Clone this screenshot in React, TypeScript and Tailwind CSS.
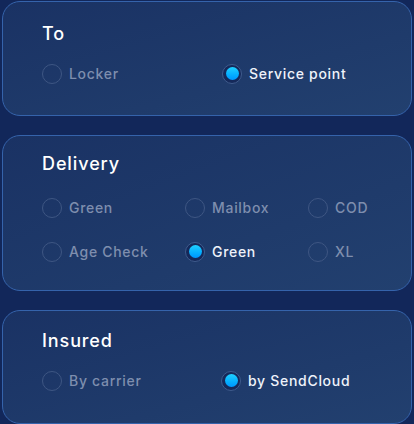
import React from 'react';

type Opt = { label: string; checked?: boolean };

function Radio({ label, checked }: Opt) {
  return (
    <label className="flex items-center gap-[7px] cursor-pointer">
      <span
        className={
          'w-[20px] h-[20px] rounded-full flex items-center justify-center border ' +
          (checked ? 'border-[#3f5b8c] bg-[#15295a]' : 'border-[#3e5683]')
        }
      >
        {checked && (
          <span className="w-[13px] h-[13px] rounded-full bg-gradient-to-b from-[#1fd0ff] to-[#0096ff]" />
        )}
      </span>
      <span
        className={
          'text-[14px] font-medium tracking-[0.7px] ' +
          (checked ? 'text-[#eef2fa]' : 'text-[#7e8eae]')
        }
      >
        {label}
      </span>
    </label>
  );
}

function Card({ title, children, className }: { title: string; children: React.ReactNode; className?: string }) {
  return (
    <section
      className={
        'rounded-[18px] border border-[#3563ab] bg-gradient-to-br from-[#1a3264] to-[#22406f] pl-[39px] pr-4 ' +
        (className ?? '')
      }
    >
      <h2 className="text-[18px] leading-[28px] font-medium text-white tracking-[0.9px]">{title}</h2>
      {children}
    </section>
  );
}

export default function App() {
  return (
    <div
      className="w-[414px] h-[424px] bg-[#12275a] pt-px px-[2px] flex flex-col gap-[19px]"
      style={{ fontFamily: 'Inter, "Liberation Sans", sans-serif' }}
    >
      <Card title="To" className="h-[115px] pt-[18px]">
        <div className="mt-[15px] grid grid-cols-[180px_1fr]">
          <Radio label="Locker" />
          <Radio label="Service point" checked />
        </div>
      </Card>

      <Card title="Delivery" className="h-[156px] pt-[14px]">
        <div className="mt-[19px] grid grid-cols-[143px_123px_1fr] gap-y-[23px]">
          <Radio label="Green" />
          <Radio label="Mailbox" />
          <Radio label="COD" />
          <Radio label="Age Check" />
          <Radio label="Green" checked />
          <Radio label="XL" />
        </div>
      </Card>

      <Card title="Insured" className="h-[114px] pt-[16px]">
        <div className="mt-[15px] grid grid-cols-[179px_1fr]">
          <Radio label="By carrier" />
          <Radio label="by SendCloud" checked />
        </div>
      </Card>
    </div>
  );
}
